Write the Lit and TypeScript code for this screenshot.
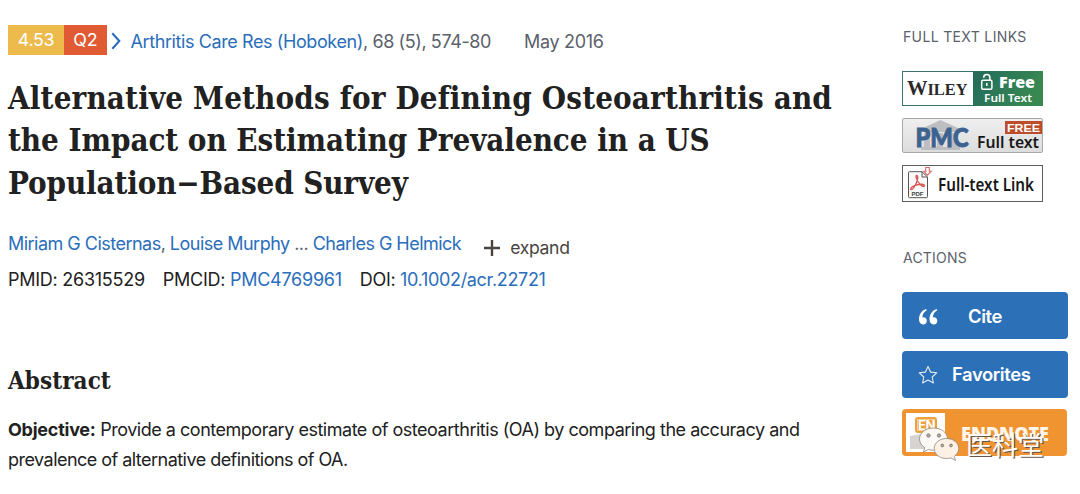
import { LitElement, html, svg, css } from 'lit';
import { customElement, property } from 'lit/decorators.js';

/** `<pm-article>` — citation line, title, authors, identifiers and abstract. */
@customElement('pm-article')
export class PmArticle extends LitElement {
  static styles = css`
    :host { display: block; color: #212121; white-space: nowrap; font-size: 18px; }
    a { color: #2a6ebb; text-decoration: none; }
    .citation { display: flex; align-items: center; height: 30px; color: #5b616b; }
    .badge {
      height: 30px;
      line-height: 29px;
      color: #fff;
      text-align: center;
      font-size: 17.8px;
    }
    .factor   { width: 56px; background: #ecbb4c; letter-spacing: -0.3px; }
    .quartile { width: 43px; background: #e05a33; }
    .chevron  { width: 10px; height: 18px; margin: 2px 9.5px 0 4px; }
    .journal  { letter-spacing: -0.4px; padding-top: 3px; }
    .date     { letter-spacing: -0.3px; padding-top: 3px; margin-left: 33px; }
    h1, h2 {
      margin: 0;
      font-family: 'DejaVu Serif Condensed', 'DejaVu Serif', serif;
      font-stretch: condensed;
      font-weight: 700;
    }
    h1 { margin-top: 22px; font-size: 31px; line-height: 42.4px; }
    h1 span { display: block; }
    .l1 { letter-spacing: 0.17px; }
    .l2 { letter-spacing: -0.04px; }
    .l3 { letter-spacing: -0.12px; }
    .authors { display: flex; height: 24px; line-height: 24px; margin-top: 28px; color: #5b616b; }
    .names { letter-spacing: -0.52px; }
    .expand { display: flex; align-items: center; padding-top: 8px; margin-left: 23px; font-size: 17.6px; letter-spacing: -0.35px; color: #494440; }
    .expand svg { width: 16px; height: 16px; margin-right: 10px; }
    .ids { display: flex; gap: 18px; height: 24px; line-height: 24px; margin-top: 12px; letter-spacing: -0.26px; }
    .ids span:last-child { letter-spacing: -0.32px; }
    h2 { margin-top: 73px; font-size: 24px; line-height: 32px; letter-spacing: 0.05px; }
    p { margin: 18px 0 0; line-height: 29.5px; letter-spacing: -0.48px; }
    p span { display: block; }
    p span:last-child { letter-spacing: -0.53px; }
    b { letter-spacing: -0.25px; }
  `;

  render() {
    return html`
      <div class="citation">
        <span class="badge factor">4.53</span>
        <span class="badge quartile">Q2</span>
        <svg class="chevron" viewBox="0 0 10 18">
          <path d="M1.3 1.3 8.3 9 1.3 16.7" fill="none" stroke="#2a6ebb" stroke-width="2.1" />
        </svg>
        <span class="journal"><a>Arthritis Care Res (Hoboken)</a>, 68 (5), 574-80</span>
        <span class="date">May 2016</span>
      </div>
      <h1>
        <span class="l1">Alternative Methods for Defining Osteoarthritis and</span>
        <span class="l2">the Impact on Estimating Prevalence in a US</span>
        <span class="l3">Population−Based Survey</span>
      </h1>
      <div class="authors">
        <span class="names"><a>Miriam G Cisternas</a>, <a>Louise Murphy</a> ... <a>Charles G Helmick</a></span>
        <span class="expand">
          <svg viewBox="0 0 16 16"><path d="M8 0v16M0 8h16" stroke="#494440" stroke-width="2.4" /></svg>
          expand
        </span>
      </div>
      <div class="ids">
        <span>PMID: 26315529</span>
        <span>PMCID: <a>PMC4769961</a></span>
        <span>DOI: <a>10.1002/acr.22721</a></span>
      </div>
      <h2>Abstract</h2>
      <p>
        <span><b>Objective:</b> Provide a contemporary estimate of osteoarthritis (OA) by comparing the accuracy and</span>
        <span>prevalence of alternative definitions of OA.</span>
      </p>
    `;
  }
}

/** `<pm-source-link>` — publisher button for one full text source. */
@customElement('pm-source-link')
export class PmSourceLink extends LitElement {
  @property() source = 'wiley';

  static styles = css`
    :host { display: block; }
    svg { display: block; overflow: visible; }
    .serif { font-family: 'Liberation Serif', serif; font-weight: 700; }
    .open  { font-family: 'Open Sans', sans-serif; font-weight: 800; }
    .noto  { font-family: 'Noto Sans', sans-serif; font-weight: 600; }
    .arial { font-family: 'Liberation Sans', sans-serif; font-weight: 700; }
    .lato  { font-family: Lato, sans-serif; font-weight: 900; }
  `;

  private _wiley() {
    return svg`
      <defs><linearGradient id="g" x2="1" y2="0.3">
        <stop stop-color="#226b5c" /><stop offset="1" stop-color="#388851" />
      </linearGradient></defs>
      <rect x="0.5" y="0.5" width="140" height="34" fill="#fff" stroke="#3c7271" />
      <rect x="71" width="70" height="35" fill="url(#g)" />
      <text class="serif" y="24" fill="#292929"><tspan x="5" font-size="20.5">W</tspan><tspan x="25.5" font-size="17" textLength="40" lengthAdjust="spacingAndGlyphs">ILEY</tspan></text>
      <g fill="none" stroke="#fff" stroke-width="1.5">
        <rect x="79.7" y="9.2" width="10.2" height="9" rx="1.3" />
        <path d="M81.7 6.8a3.1 3.1 0 0 1 6.2-.3V9" />
        <path d="M84.8 12v3" />
      </g>
      <text class="open" x="97" y="17.2" font-size="15.6" textLength="36" lengthAdjust="spacingAndGlyphs" fill="#fff">Free</text>
      <text class="noto" x="82" y="31.4" font-size="10.4" textLength="48" lengthAdjust="spacingAndGlyphs" fill="#fff">Full Text</text>
    `;
  }

  private _pmc() {
    return svg`
      <defs><linearGradient id="g" x2="0" y2="1">
        <stop stop-color="#efefef" /><stop offset="1" stop-color="#dcdcdc" />
      </linearGradient></defs>
      <rect x="0.5" y="0.5" width="140" height="34" rx="1.5" fill="url(#g)" stroke="#a9a9a9" />
      <path d="M19 11 38.5 2 58 11v3H19zM22 15h6v14h-6zM35 15h6v14h-6zM49 15h6v14h-6zM19 29h39v3H19z" fill="#bdbec1" />
      <text class="lato" x="13.5" y="28.8" font-size="26" textLength="53" lengthAdjust="spacingAndGlyphs" fill="#3d628f" stroke="#3d628f" stroke-width="0.9">PMC</text>
      <rect x="103" y="3" width="37" height="13" fill="#bd4c2b" />
      <text class="arial" x="105" y="13.7" font-size="11.5" textLength="33" lengthAdjust="spacingAndGlyphs" fill="#fff">FREE</text>
      <text class="noto" x="75" y="30" font-size="16" textLength="62" lengthAdjust="spacingAndGlyphs" fill="#171717">Full text</text>
    `;
  }

  private _pdf() {
    return svg`
      <rect x="0.5" y="0.5" width="140" height="36" fill="#fff" stroke="#5e5e5e" />
      <path d="M20 6.7H7.5q-1 0-1 1v24q0 1 1 1h17q1 0 1-1V12zM20 6.7V12h5.5" fill="#fafafa" stroke="#555" />
      <path d="M14.5 10.5c2 0 1.3 4-.2 7.5-1.3 3-3.3 6.5-5 6.5-2.2-1 2-4 6-4.8 3-.7 7.5-.7 7.2 1.1-.9 2-4.5-.9-6.6-4.3-1.6-2.7-2.4-6-1.4-6Z" fill="none" stroke="#d95757" stroke-width="1.4" />
      <path d="M23.7 2.5h3.6v3.7h1.9l-3.7 4-3.7-4h1.9z" fill="#fff" stroke="#e06464" stroke-width="1.1" />
      <text class="arial" x="9.5" y="30.6" font-size="6.2" textLength="12" lengthAdjust="spacingAndGlyphs" fill="#444">PDF</text>
      <text class="noto" x="36" y="25.5" font-size="17" textLength="96" lengthAdjust="spacingAndGlyphs" fill="#171717">Full-text Link</text>
    `;
  }

  render() {
    const height = this.source === 'pdf' ? 37 : 35;
    const art = this.source === 'wiley' ? this._wiley() : this.source === 'pmc' ? this._pmc() : this._pdf();
    return html`<svg width="141" height=${height} viewBox="0 0 141 ${height}">${art}</svg>`;
  }
}

/** `<pm-sidebar>` — full text sources and the action buttons. */
@customElement('pm-sidebar')
export class PmSidebar extends LitElement {
  static styles = css`
    :host { display: block; white-space: nowrap; }
    .label { height: 20px; line-height: 20px; padding-left: 1px; font-size: 14px; color: #5b616b; letter-spacing: 0.35px; }
    .label.tight { letter-spacing: 0.2px; }
    .sources { display: grid; gap: 12px; margin: 24px 0 46px; }
    .actions { display: grid; gap: 11.7px; margin-top: 24px; }
    .button {
      box-sizing: border-box;
      display: flex;
      align-items: center;
      width: 166px;
      height: 47px;
      border-radius: 4px;
      background: #2c71b8;
      color: #fff;
      font-size: 18.4px;
      font-weight: 600;
      letter-spacing: -0.4px;
    }
    .quote { width: 20px; height: 16px; margin: 2px 30px 0 16px; }
    .star { width: 20px; height: 20px; margin: 1px 14px 0 16px; }
    .endnote { position: relative; width: 165px; background: #f09432; }
    .tile { width: 39px; height: 39px; margin-left: 4px; background: #fff; }
    .tile svg { display: block; }
    .name { margin: 2px 0 0 16px; font: 800 19px 'Open Sans', sans-serif; letter-spacing: 0; }
    .name svg { display: block; overflow: visible; }
    .mark { position: absolute; left: 16px; top: 16px; overflow: visible; }
    .mark text { font-family: 'Noto Sans CJK SC', sans-serif; font-weight: 400; letter-spacing: 0; }
  `;

  render() {
    return html`
      <div class="label">FULL TEXT LINKS</div>
      <div class="sources">
        <pm-source-link source="wiley"></pm-source-link>
        <pm-source-link source="pmc"></pm-source-link>
        <pm-source-link source="pdf"></pm-source-link>
      </div>
      <div class="label tight">ACTIONS</div>
      <div class="actions">
        <div class="button">
          <svg class="quote" viewBox="0 0 20 16" fill="#fff">
            <path d="M8 0C3.5 1.5 1 5.5 1 10.3 1 13.6 2.7 15.5 5 15.5a3.7 3.7 0 0 0 3.8-3.7c0-2.1-1.5-3.6-3.5-3.6-.5 0-.8.1-1 .2C4.5 5.5 5.7 3 8.8 1.3z" />
            <path d="M18.5 0c-4.500 1.500-7 5.500-7 10.300 0 3.300 1.700 5.200 4 5.200a3.700 3.700 0 0 0 3.800-3.700c0-2.100-1.500-3.600-3.500-3.600-.5 0-.8.1-1 .2.2-2.900 1.400-5.400 4.500-7.100z" />
          </svg>
          Cite
        </div>
        <div class="button">
          <svg class="star" viewBox="0 0 20 20">
            <path d="m10 1.5 2.6 5.6 6.1.7-4.5 4.2 1.2 6-5.4-3-5.4 3 1.2-6L1.3 7.8l6.1-.7z" fill="none" stroke="#e3edf7" stroke-width="1.1" stroke-linejoin="round" />
          </svg>
          Favorites
        </div>
        <div class="button endnote">
          <span class="tile">
            <svg width="39" height="39" viewBox="0 0 39 39">
              <path d="M4 23l22-4v17H4z" fill="#d6d3d0" />
              <rect x="9" y="4" width="22" height="16" rx="3" fill="#eba13f" />
              <rect x="11.5" y="6.5" width="17" height="11" fill="none" stroke="#f6cf8f" />
              <text x="12" y="16.5" font-size="12.5" font-weight="700" textLength="17" lengthAdjust="spacingAndGlyphs" fill="#fff">EN</text>
            </svg>
          </span>
          <span class="name">
            <svg width="90" height="24"><text y="18.5" x="0" font-size="19" textLength="88" lengthAdjust="spacingAndGlyphs" fill="#fff5e9">ENDNOTE</text></svg>
          </span>
          <svg class="mark" width="132" height="42" viewBox="0 0 132 42">
            <path d="M15.5 3C7.5 3 1.5 7.8 1.5 14c0 3.6 2 6.6 5.2 8.6L5.5 27l5-2.5c1.6.5 3.3.7 5 .7 8 0 14-4.900 14-11.200S23.500 3 15.500 3z" fill="#fdfbf8" fill-opacity="0.95" stroke="#8d857c" stroke-width="0.8" />
            <path d="M28.5 13.5c-7 0-12.3 4.400-12.300 10s5.300 10 12.300 10c1.600 0 3-.2 4.300-.6l4.700 2.600-1.200-4.200c2.700-1.800 4.400-4.600 4.400-7.800 0-5.600-5.300-10-12.200-10z" fill="#fdf1e5" stroke="#8d857c" stroke-width="0.8" />
            <g fill="#b4aaa0" stroke="#70685f" stroke-width="0.7">
              <circle cx="10.5" cy="10.5" r="1.7" /><circle cx="21" cy="10.5" r="1.7" />
              <circle cx="24.3" cy="20.5" r="1.4" /><circle cx="33" cy="20.5" r="1.4" />
            </g>
            <text x="49.3" y="31.3" font-size="26" textLength="78" fill="#68564a">医科堂</text>
            <text x="48" y="30" font-size="26" textLength="78" fill="#fff">医科堂</text>
          </svg>
        </div>
      </div>
    `;
  }
}

@customElement('app-root')
export class AppRoot extends LitElement {
  static styles = css`
    :host {
      box-sizing: border-box;
      display: grid;
      grid-template-columns: 894px 166px;
      height: 494px;
      padding: 25px 0 0 8px;
      overflow: hidden;
      background: #fff;
      font-family: Inter, 'Liberation Sans', sans-serif;
    }
    pm-sidebar { padding-top: 2px; }
  `;

  render() {
    return html`
      <pm-article></pm-article>
      <pm-sidebar></pm-sidebar>
    `;
  }
}

declare global {
  interface HTMLElementTagNameMap {
    'app-root': AppRoot;
    'pm-article': PmArticle;
    'pm-sidebar': PmSidebar;
    'pm-source-link': PmSourceLink;
  }
}
